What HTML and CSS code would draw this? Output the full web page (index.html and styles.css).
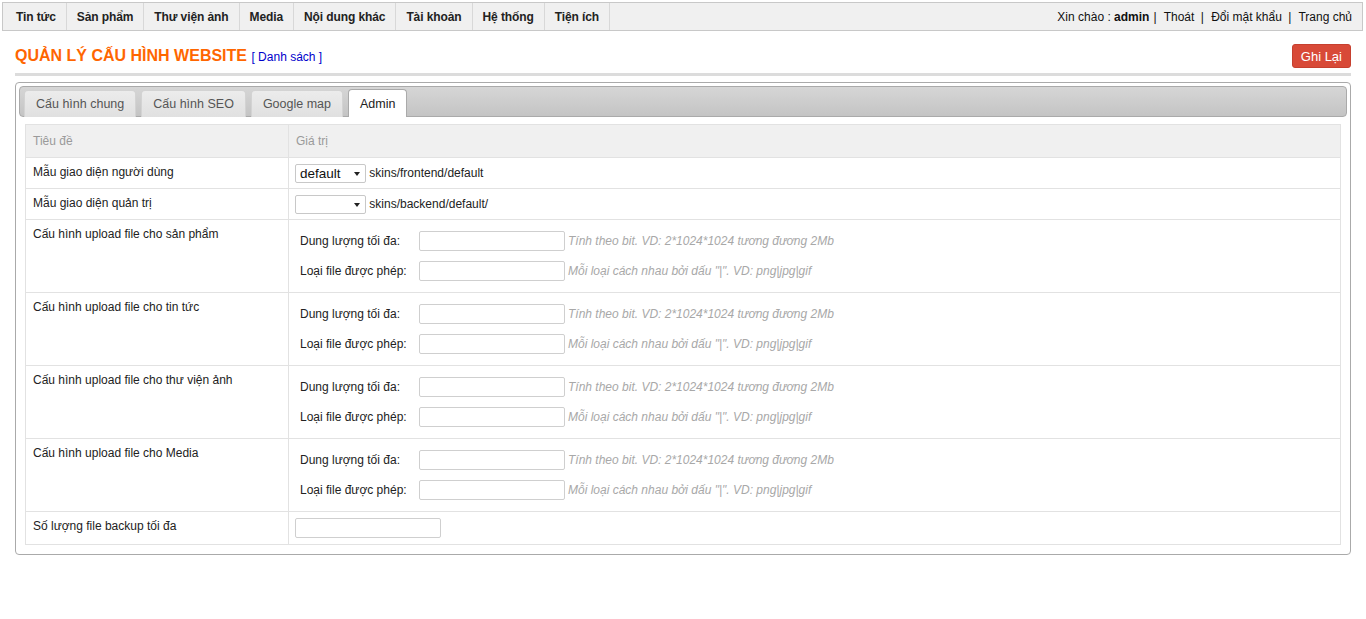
FILE: index.html
```html
<!DOCTYPE html>
<html lang="vi">
<head>
<meta charset="utf-8">
<title>Quản lý cấu hình website</title>
<link rel="stylesheet" href="styles.css">
</head>
<body>
<div class="topnav">
  <ul class="menu">
    <li>Tin tức</li>
    <li>Sản phẩm</li>
    <li>Thư viện ảnh</li>
    <li>Media</li>
    <li>Nội dung khác</li>
    <li>Tài khoản</li>
    <li>Hệ thống</li>
    <li>Tiện ích</li>
  </ul>
  <div class="userbar">Xin chào : <b>admin</b> <span class="sep">|</span> Thoát <span class="sep">|</span> Đổi mật khẩu <span class="sep">|</span> Trang chủ</div>
</div>

<div class="page">
  <div class="pagehead">
    <h1 class="title">QUẢN LÝ CẤU HÌNH WEBSITE <a class="sub">[ Danh sách ]</a></h1>
    <button class="btn-save">Ghi Lại</button>
  </div>
  <div class="rule"></div>

  <div class="tabs">
    <div class="tabbar">
      <span class="tab">Cấu hình chung</span>
      <span class="tab">Cấu hình SEO</span>
      <span class="tab">Google map</span>
      <span class="tab active">Admin</span>
    </div>
    <div class="panel">
      <table class="grid">
        <thead>
          <tr><th class="c1">Tiêu đề</th><th>Giá trị</th></tr>
        </thead>
        <tbody>
          <tr>
            <td class="lbl">Mẫu giao diện người dùng</td>
            <td class="val"><span class="select"><span class="sv">default</span><span class="caret"></span></span> skins/frontend/default</td>
          </tr>
          <tr>
            <td class="lbl">Mẫu giao diện quản trị</td>
            <td class="val"><span class="select"><span class="sv"></span><span class="caret"></span></span> skins/backend/default/</td>
          </tr>
          <tr>
            <td class="lbl">Cấu hình upload file cho sản phẩm</td>
            <td class="val up">
              <div class="uprow"><span class="ul">Dung lượng tối đa:</span><span class="inp"></span><span class="hint">Tính theo bit. VD: 2*1024*1024 tương đương 2Mb</span></div>
              <div class="uprow"><span class="ul">Loại file được phép:</span><span class="inp"></span><span class="hint">Mỗi loại cách nhau bởi dấu "|". VD: png|jpg|gif</span></div>
            </td>
          </tr>
          <tr>
            <td class="lbl">Cấu hình upload file cho tin tức</td>
            <td class="val up">
              <div class="uprow"><span class="ul">Dung lượng tối đa:</span><span class="inp"></span><span class="hint">Tính theo bit. VD: 2*1024*1024 tương đương 2Mb</span></div>
              <div class="uprow"><span class="ul">Loại file được phép:</span><span class="inp"></span><span class="hint">Mỗi loại cách nhau bởi dấu "|". VD: png|jpg|gif</span></div>
            </td>
          </tr>
          <tr>
            <td class="lbl">Cấu hình upload file cho thư viện ảnh</td>
            <td class="val up">
              <div class="uprow"><span class="ul">Dung lượng tối đa:</span><span class="inp"></span><span class="hint">Tính theo bit. VD: 2*1024*1024 tương đương 2Mb</span></div>
              <div class="uprow"><span class="ul">Loại file được phép:</span><span class="inp"></span><span class="hint">Mỗi loại cách nhau bởi dấu "|". VD: png|jpg|gif</span></div>
            </td>
          </tr>
          <tr>
            <td class="lbl">Cấu hình upload file cho Media</td>
            <td class="val up">
              <div class="uprow"><span class="ul">Dung lượng tối đa:</span><span class="inp"></span><span class="hint">Tính theo bit. VD: 2*1024*1024 tương đương 2Mb</span></div>
              <div class="uprow"><span class="ul">Loại file được phép:</span><span class="inp"></span><span class="hint">Mỗi loại cách nhau bởi dấu "|". VD: png|jpg|gif</span></div>
            </td>
          </tr>
          <tr>
            <td class="lbl">Số lượng file backup tối đa</td>
            <td class="val last"><span class="inp wide"></span></td>
          </tr>
        </tbody>
      </table>
    </div>
  </div>
</div>
</body>
</html>
```

FILE: styles.css
```css
* { box-sizing: border-box; }
html, body { margin: 0; padding: 0; background: #fff; }
body {
  font-family: "Liberation Sans", Arial, sans-serif;
  font-size: 12px;
  color: #222;
}

.topnav {
  margin: 2px 3px 0 2px;
  height: 29px;
  border: 1px solid #c8c8c8;
  background: #f0f0f0;
  display: flex;
  justify-content: space-between;
  align-items: stretch;
}
.menu {
  list-style: none;
  margin: 0;
  padding: 0 0 0 3px;
  display: flex;
}
.menu li {
  font-weight: bold;
  color: #222;
  display: flex;
  align-items: center;
  padding: 1px 10px 0 10px;
  border-right: 1px solid #d8d8d8;
  letter-spacing: -0.1px;
}
.userbar {
  display: flex;
  align-items: center;
  padding: 1px 10px 0 0;
  color: #111;
  white-space: pre;
}
.userbar b { margin-right: 1px; }
.sep { margin: 0 4px 0 3px; }

.page { padding: 0 15px 0 15px; }
.pagehead {
  display: flex;
  justify-content: space-between;
  align-items: center;
  height: 40px;
  padding-top: 10px;
}
.title {
  margin: 0;
  font-size: 16px;
  font-weight: bold;
  color: #ff6600;
  letter-spacing: 0;
}
.title .sub {
  font-size: 12px;
  font-weight: normal;
  color: #0000cc;
  letter-spacing: 0;
}
.btn-save {
  font-family: "Liberation Sans", Arial, sans-serif;
  font-size: 13px;
  color: #fff;
  background: #d84a38;
  border: 1px solid #c6402f;
  border-radius: 3px;
  height: 24px;
  padding: 0 8px;
  margin-right: 0;
}
.rule {
  height: 3px;
  background: #dcdcdc;
  margin-top: 2px;
}

.tabs {
  margin-top: 6px;
  border: 1px solid #aaa;
  border-radius: 4px;
  padding: 3px 3px 9px 3px;
}
.tabbar {
  height: 31px;
  border: 1px solid #aaa;
  border-radius: 4px;
  background: linear-gradient(#d6d6d6, #c4c4c4);
  display: flex;
  align-items: flex-end;
  padding: 0 0 0 4px;
  gap: 5px;
}
.tab {
  height: 27px;
  padding: 0 11px;
  display: flex;
  align-items: center;
  font-size: 12.5px;
  color: #555;
  background: linear-gradient(#ececec, #e0e0e0);
  border: 1px solid #d3d3d3;
  border-bottom: 0;
  border-radius: 4px 4px 0 0;
  margin-bottom: -1px;
}
.tab.active {
  background: #fff;
  border-color: #aaa;
  color: #212121;
  height: 28px;
  padding: 0 11px;
}
.panel { padding: 7px 6px 0 6px; }

.grid {
  width: 100%;
  border-collapse: collapse;
  border: 1px solid #e2e2e2;
}
.grid th, .grid td {
  border: 1px solid #e2e2e2;
  text-align: left;
  vertical-align: top;
}
.grid th {
  background: #f0f0f0;
  color: #9a9a9a;
  font-weight: normal;
  height: 33px;
  padding: 9px 7px 0 7px;
}
.grid th.c1 { width: 263px; }
.lbl {
  padding: 7px 7px 0 7px;
  line-height: 15px;
}
.val {
  height: 31px;
  padding: 6px 7px 0 6px;
  line-height: 19px;
}
.val.up { height: 73px; padding: 6px 7px 0 5px; }
.val.last { height: 33px; padding: 6px 7px 0 6px; }

.select {
  display: inline-flex;
  align-items: center;
  justify-content: space-between;
  vertical-align: top;
  width: 71px;
  height: 19px;
  border: 1px solid #c8c8c8;
  border-radius: 2px;
  background: #fff;
  padding: 0 5px 0 4px;
  font-size: 13.5px;
  color: #111;
}
.caret {
  width: 0; height: 0;
  border-left: 3.5px solid transparent;
  border-right: 3.5px solid transparent;
  border-top: 4px solid #222;
}

.uprow {
  display: flex;
  align-items: center;
  height: 30px;
  padding-left: 6px;
}
.ul { width: 119px; color: #222; }
.inp {
  display: inline-block;
  width: 146px;
  height: 20px;
  border: 1px solid #cfcfcf;
  border-radius: 2px;
  background: #fff;
}
.inp.wide { width: 146px; }
.hint {
  margin-left: 3px;
  color: #a8a8a8;
  font-style: italic;
}
```
